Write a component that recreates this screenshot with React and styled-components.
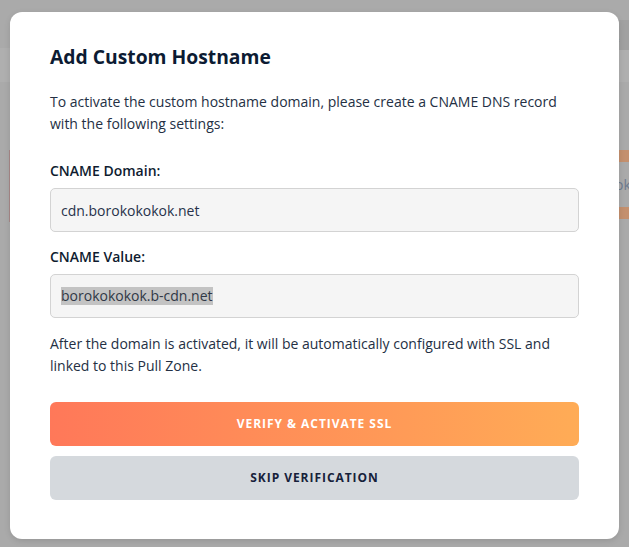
import React from "react";
import styled, { createGlobalStyle } from "styled-components";

const Global = createGlobalStyle`
  html, body { margin: 0; padding: 0; }
  body {
    font-family: "Open Sans", "Noto Sans", "Liberation Sans", sans-serif;
    background: #aaaaaa;
    -webkit-font-smoothing: antialiased;
  }
  * { box-sizing: border-box; }
`;

const Page = styled.div`
  position: relative;
  width: 629px;
  height: 547px;
  overflow: hidden;
  background: #aaaaaa;
`;

const TopBar = styled.div`
  height: 48px;
  display: flex;
  justify-content: flex-end;
  align-items: flex-end;
`;

const TopChip = styled.div`
  width: 30px;
  height: 30px;
  margin-bottom: -2px;
  background: #a1a1a1;
  display: flex;
  align-items: center;
  padding-left: 12px;
  font-size: 13px;
  color: #7d8796;
  text-decoration: underline;
`;

const SubBar = styled.div`
  height: 34px;
  background: #afafaf;
`;

const Content = styled.div`
  padding-top: 68px;
  display: flex;
  justify-content: space-between;
`;

const LeftCard = styled.div`
  width: 10px;
  height: 72px;
  border-right: 1px solid #a88a8a;
`;

const RightCard = styled.div`
  width: 14px;
  display: flex;
  flex-direction: column;
`;

const OrangeStrip = styled.div`
  height: 12px;
  background: #c4906e;
`;

const CardText = styled.div`
  height: 45px;
  display: flex;
  align-items: center;
  font-size: 14px;
  color: #6d7b8f;
  white-space: nowrap;
  overflow: hidden;
`;

const Modal = styled.div`
  position: absolute;
  top: 12px;
  left: 10px;
  width: 609px;
  height: 527px;
  background: #ffffff;
  border-radius: 12px;
  box-shadow: 0 2px 6px rgba(0, 0, 0, 0.12);
  padding: 31px 40px 39px 40px;
  display: flex;
  flex-direction: column;
`;

const Title = styled.h2`
  margin: 0 0 20px 0;
  font-size: 19.3px;
  line-height: 28px;
  font-weight: 700;
  color: #0c1b33;
`;

const Text = styled.p`
  margin: 0 0 ${(p) => p.$mb}px 0;
  font-size: 14px;
  line-height: 22px;
  color: #243044;
`;

const Label = styled.div`
  font-size: 14px;
  line-height: 20px;
  font-weight: 600;
  color: #0f1c30;
  margin-bottom: 7px;
`;

const Field = styled.div`
  height: 44px;
  background: #f5f5f5;
  border: 1px solid #d3d3d3;
  border-radius: 5px;
  padding: 0 10px;
  display: flex;
  align-items: center;
  font-size: 14px;
  color: #27324a;
  margin-bottom: 15px;
`;

const Selected = styled.span`
  background: #c3c3c3;
  color: #303846;
  line-height: 18px;
`;

const Buttons = styled.div`
  display: flex;
  flex-direction: column;
  gap: 10px;
`;

const Button = styled.button`
  height: 44px;
  width: 100%;
  border: none;
  border-radius: 6px;
  padding: 0 0 2px 0;
  font-family: inherit;
  font-size: 12px;
  font-weight: 700;
  letter-spacing: 0.95px;
  text-transform: uppercase;
  cursor: pointer;
  background: ${(p) =>
    p.$primary ? "linear-gradient(90deg, #ff7859 0%, #ffac56 100%)" : "#d5d9dd"};
  color: ${(p) => (p.$primary ? "#ffffff" : "#16213a")};
`;

export default function App() {
  return (
    <>
      <Global />
      <Page>
        <TopBar>
          <TopChip>A</TopChip>
        </TopBar>
        <SubBar />
        <Content>
          <LeftCard />
          <RightCard>
            <OrangeStrip />
            <CardText>ok</CardText>
            <OrangeStrip />
          </RightCard>
        </Content>
        <Modal>
          <Title>Add Custom Hostname</Title>
          <Text $mb={26}>
            To activate the custom hostname domain, please create a CNAME DNS record
            with the following settings:
          </Text>
          <Label>CNAME Domain:</Label>
          <Field>cdn.borokokokok.net</Field>
          <Label>CNAME Value:</Label>
          <Field>
            <Selected>borokokokok.b-cdn.net</Selected>
          </Field>
          <Text $mb={25}>
            After the domain is activated, it will be automatically configured with SSL and
            linked to this Pull Zone.
          </Text>
          <Buttons>
            <Button $primary>Verify &amp; Activate SSL</Button>
            <Button>Skip Verification</Button>
          </Buttons>
        </Modal>
      </Page>
    </>
  );
}
